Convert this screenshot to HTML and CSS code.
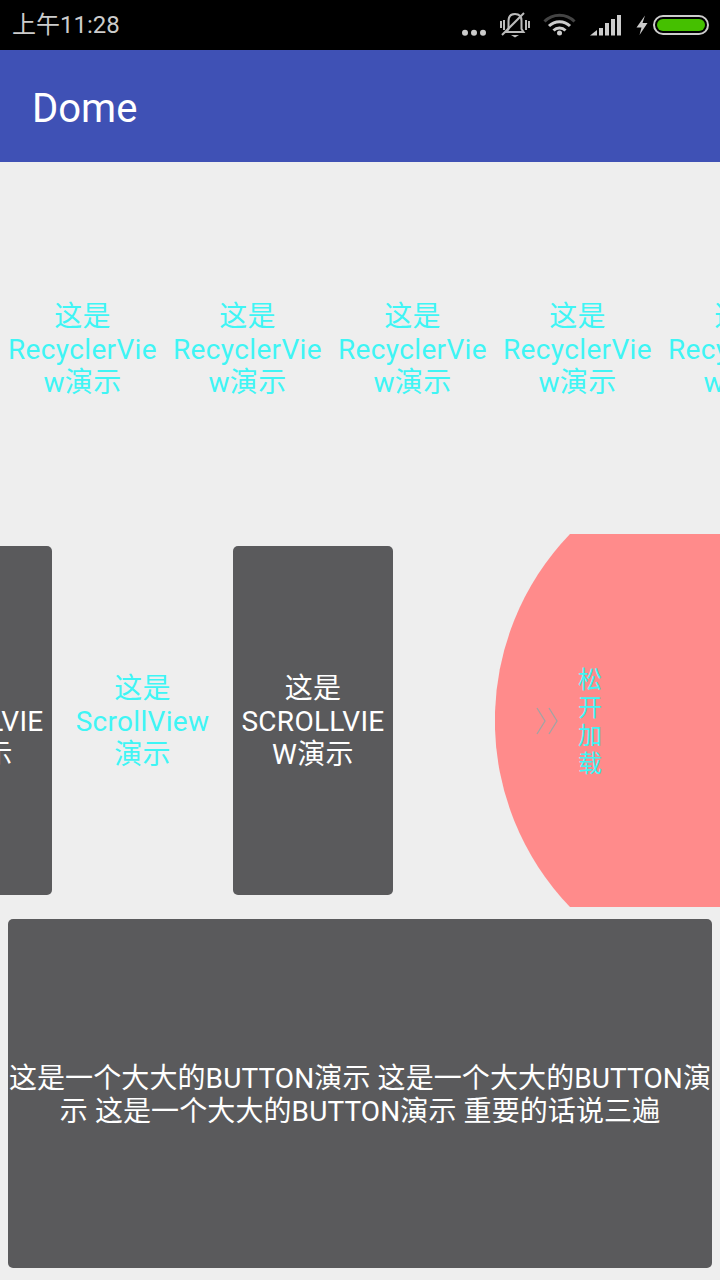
FILE: index.html
```html
<!DOCTYPE html>
<html lang="zh-CN">
<head>
    <meta charset="UTF-8">
    <meta name="viewport" content="width=device-width, initial-scale=1.0">
    <title>Dome</title>
    <link rel="stylesheet" href="styles.css">
</head>
<body>
    <div class="status-bar">
        <span class="clock">上午11:28</span>
        <svg class="status-icons" width="260" height="50" viewBox="440 0 260 50">
            <g fill="#ccc">
                <circle cx="465" cy="32.700" r="3"/>
                <circle cx="474" cy="32.700" r="3"/>
                <circle cx="483" cy="32.700" r="3"/>
            </g>
            <!-- muted bell -->
            <g fill="none" stroke="#bbb" stroke-width="2">
                <path d="M508.500 29V21c0-5 3-7 6.500-7s6.500 2 6.500 7v8l2 3h-17z"/>
                <path d="M502 35L524 13"/>
            </g>
            <path d="M511 35h8l-4 2.500z" fill="#bbb"/>
            <g fill="#bbb">
                <rect x="500" y="21" width="2" height="7"/>
                <rect x="503" y="20" width="2" height="10"/>
                <rect x="525" y="20" width="2" height="10"/>
                <rect x="528" y="21" width="2" height="7"/>
            </g>
            <!-- wifi -->
            <g fill="none" stroke-width="3">
                <path d="M544.500 21.500a21 21 0 0 1 30 0" stroke="#444"/>
                <path d="M549 26a15 15 0 0 1 21 0" stroke="#ccc"/>
                <path d="M553.500 30.500a8.500 8.500 0 0 1 12 0" stroke="#ccc"/>
            </g>
            <circle cx="559.500" cy="33" r="2.500" fill="#ccc"/>
            <!-- signal -->
            <g fill="#ccc">
                <path d="M590 35.500l7-5.500v5.500z"/>
                <rect x="599" y="28" width="4" height="7.500"/>
                <rect x="605" y="23" width="4" height="12.500"/>
                <rect x="611" y="19" width="4" height="16.500"/>
                <rect x="617" y="15" width="4" height="20.500"/>
            </g>
            <path d="M645 15.500l-8.500 12h5l-2 7.500 8-12h-5z" fill="#ccc"/>
        </svg>
        <div class="battery"><div class="battery-fill"></div></div>
    </div>

    <div class="app-bar">Dome</div>

    <div class="recycler-row">
        <div class="recycler-item">这是<br>RecyclerVie<br>w演示</div>
        <div class="recycler-item">这是<br>RecyclerVie<br>w演示</div>
        <div class="recycler-item">这是<br>RecyclerVie<br>w演示</div>
        <div class="recycler-item">这是<br>RecyclerVie<br>w演示</div>
        <div class="recycler-item">这是<br>RecyclerVie<br>w演示</div>
    </div>

    <div class="scroll-row">
        <div class="dark-btn">这是<br>SCROLLVIE<br>W演示</div>
        <div class="scroll-text">这是<br>ScrollView<br>演示</div>
        <div class="dark-btn">这是<br>SCROLLVIE<br>W演示</div>
        <div class="pull-panel">
            <svg class="pull-shape" width="225" height="373" viewBox="0 0 225 373">
                <path d="M75 0A269 269 0 0 0 75 373H225V0z" fill="#ff8b8b"/>
            </svg>
            <svg class="pull-arrow" width="24" height="28" viewBox="0 0 24 28">
                <path d="M2 1L10 14L2 27M14 1L22 14L14 27" fill="none" stroke="#a3a3a3" stroke-width="1.300"/>
            </svg>
            <div class="pull-text">松<br>开<br>加<br>载</div>
        </div>
    </div>

    <div class="big-btn">这是一个大大的BUTTON演示 这是一个大大的BUTTON演示 这是一个大大的BUTTON演示 重要的话说三遍</div>
</body>
</html>
```

FILE: styles.css
```css
html {
    background: #eee;
}
body {
    margin: 0;
    width: 720px;
    height: 1280px;
    overflow: hidden;
    background: #eee;
    font-family: Roboto, 'Noto Sans CJK SC', sans-serif;
    font-size: 28px;
    line-height: 33px;
}
.status-bar {
    height: 50px;
    background: #000;
    display: flex;
    align-items: center;
    color: #ccc;
}
.clock {
    margin-left: 12px;
    font-size: 24px;
}
.status-icons {
    position: absolute;
    left: 440px;
    top: 0;
}
.battery {
    position: absolute;
    left: 653px;
    top: 15px;
    width: 56px;
    height: 20px;
    box-sizing: border-box;
    border: 2px solid #ccc;
    border-radius: 10px;
    padding: 2px;
}
.battery-fill {
    height: 100%;
    background: #45c000;
    border-radius: 6px;
}
.app-bar {
    height: 112px;
    background: #3f51b5;
    color: #fff;
    font-size: 40px;
    line-height: 118px;
    padding-left: 32px;
}
.recycler-row {
    height: 372px;
    padding-top: 2px;
    box-sizing: border-box;
    display: flex;
    align-items: center;
    overflow: hidden;
}
.recycler-item {
    flex: 0 0 165px;
    text-align: center;
    white-space: nowrap;
    letter-spacing: .35px;
    color: #3ff5f5;
}
.scroll-row {
    height: 373px;
    position: relative;
    display: flex;
    align-items: center;
    overflow: hidden;
    margin-left: -108px;
    width: 828px;
}
.dark-btn {
    flex: 0 0 160px;
    height: 349px;
    padding-top: 2px;
    box-sizing: border-box;
    display: flex;
    align-items: center;
    justify-content: center;
    text-align: center;
    white-space: nowrap;
    letter-spacing: .3px;
    background: #5a5a5c;
    color: #fff;
    border-radius: 5px;
}
.scroll-text {
    flex: 0 0 165px;
    margin: 2px 8px 0;
    text-align: center;
    letter-spacing: .3px;
    color: #3ff5f5;
}
.pull-panel {
    position: absolute;
    right: 0;
    top: 0;
    width: 225px;
    height: 373px;
    display: flex;
    align-items: center;
}
.pull-shape {
    position: absolute;
    left: 0;
    top: 0;
}
.pull-arrow {
    position: relative;
    margin-left: 40px;
}
.pull-text {
    position: relative;
    margin-left: 19px;
    padding-top: 2px;
    font-size: 24px;
    line-height: 28px;
    color: #3ff5f5;
}
.big-btn {
    height: 349px;
    margin: 12px 8px 0;
    padding-top: 2px;
    box-sizing: border-box;
    display: flex;
    align-items: center;
    justify-content: center;
    text-align: center;
    letter-spacing: .1px;
    background: #5a5a5c;
    color: #fff;
    border-radius: 5px;
}
```
